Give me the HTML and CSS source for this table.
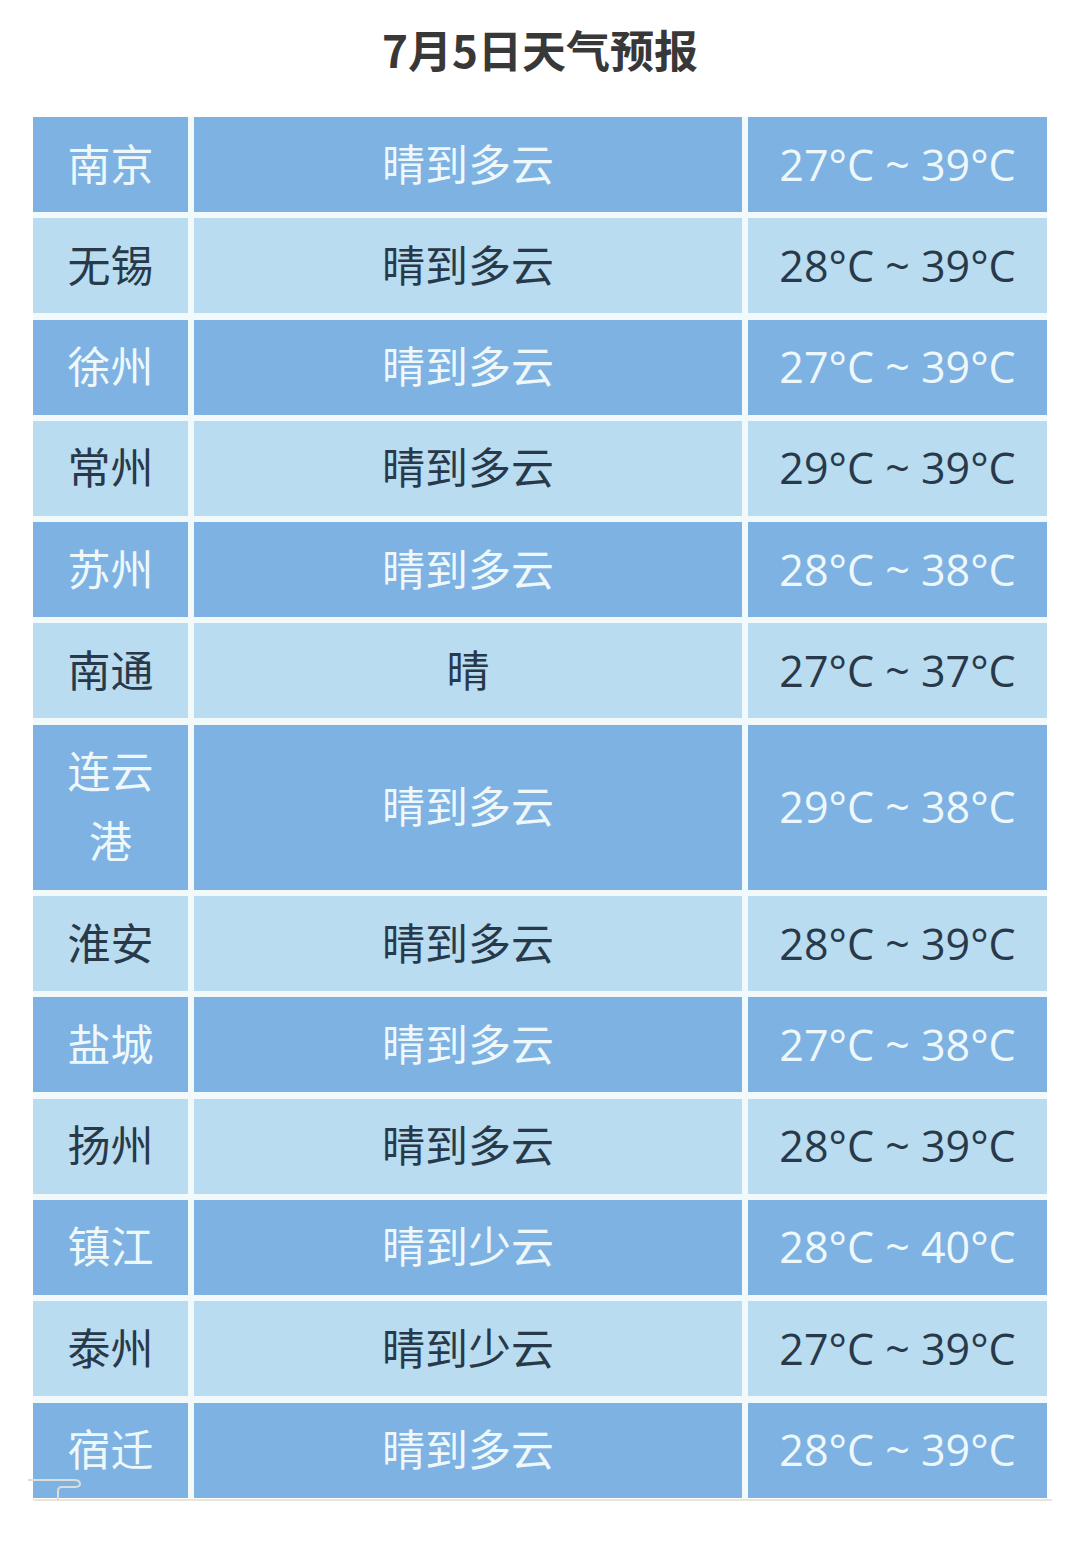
FILE: index.html
```html
<!DOCTYPE html>
<html lang="zh-CN">
<head>
<meta charset="utf-8">
<title>7月5日天气预报</title>
<link rel="stylesheet" href="styles.css">
</head>
<body>
<div class="page">
  <h1 class="title">7月5日天气预报</h1>
  <div class="table-wrap">
    <div class="table">
      <div class="cell dark">南京</div><div class="cell dark">晴到多云</div><div class="cell dark">27°C ~ 39°C</div>
      <div class="cell light">无锡</div><div class="cell light">晴到多云</div><div class="cell light">28°C ~ 39°C</div>
      <div class="cell dark">徐州</div><div class="cell dark">晴到多云</div><div class="cell dark">27°C ~ 39°C</div>
      <div class="cell light">常州</div><div class="cell light">晴到多云</div><div class="cell light">29°C ~ 39°C</div>
      <div class="cell dark">苏州</div><div class="cell dark">晴到多云</div><div class="cell dark">28°C ~ 38°C</div>
      <div class="cell light">南通</div><div class="cell light">晴</div><div class="cell light">27°C ~ 37°C</div>
      <div class="cell dark">连云<br>港</div><div class="cell dark">晴到多云</div><div class="cell dark">29°C ~ 38°C</div>
      <div class="cell light">淮安</div><div class="cell light">晴到多云</div><div class="cell light">28°C ~ 39°C</div>
      <div class="cell dark">盐城</div><div class="cell dark">晴到多云</div><div class="cell dark">27°C ~ 38°C</div>
      <div class="cell light">扬州</div><div class="cell light">晴到多云</div><div class="cell light">28°C ~ 39°C</div>
      <div class="cell dark">镇江</div><div class="cell dark">晴到少云</div><div class="cell dark">28°C ~ 40°C</div>
      <div class="cell light">泰州</div><div class="cell light">晴到少云</div><div class="cell light">27°C ~ 39°C</div>
      <div class="cell dark">宿迁</div><div class="cell dark">晴到多云</div><div class="cell dark">28°C ~ 39°C</div>
    </div>
    <svg class="squiggle" width="70" height="30" viewBox="0 0 70 30">
      <path d="M0 6 L46 6 Q52 6 52 10 L52 10 Q52 13 46 13 L34 13 Q30 13 30 17 L30 28" fill="none" stroke="#dcdfd8" stroke-width="2"/>
    </svg>
  </div>
</div>
</body>
</html>
```
FILE: styles.css
```css
html, body {
  margin: 0;
  padding: 0;
  background: #ffffff;
}

.page {
  width: 1080px;
  padding-top: 18px;
}

.title {
  margin: 0;
  height: 62px;
  line-height: 62px;
  text-align: center;
  font-family: "Noto Sans CJK SC", "Noto Sans", sans-serif;
  font-weight: 700;
  font-size: 44px;
  color: #383838;
}

.table-wrap {
  position: relative;
  margin: 37px 0 0 33px;
  width: 1019px;
  padding-bottom: 1px;
  border-bottom: 2px solid #e8e6d8;
}

.table {
  display: grid;
  grid-template-columns: 155px 548px 299px;
  column-gap: 6px;
  row-gap: 6.3px;
  width: 1014px;
  background: #f2f9fb;
}

.cell {
  display: flex;
  align-items: center;
  justify-content: center;
  text-align: center;
  padding: 12.5px 0;
  line-height: 70px;
  font-family: "Open Sans", "Noto Sans CJK SC", sans-serif;
  font-weight: 400;
  font-size: 43px;
}

.dark {
  background: #7db2e2;
  color: #eef8fb;
}

.light {
  background: #b9dcf0;
  color: #28394a;
}

.squiggle {
  position: absolute;
  left: -5px;
  bottom: -5px;
}
```
